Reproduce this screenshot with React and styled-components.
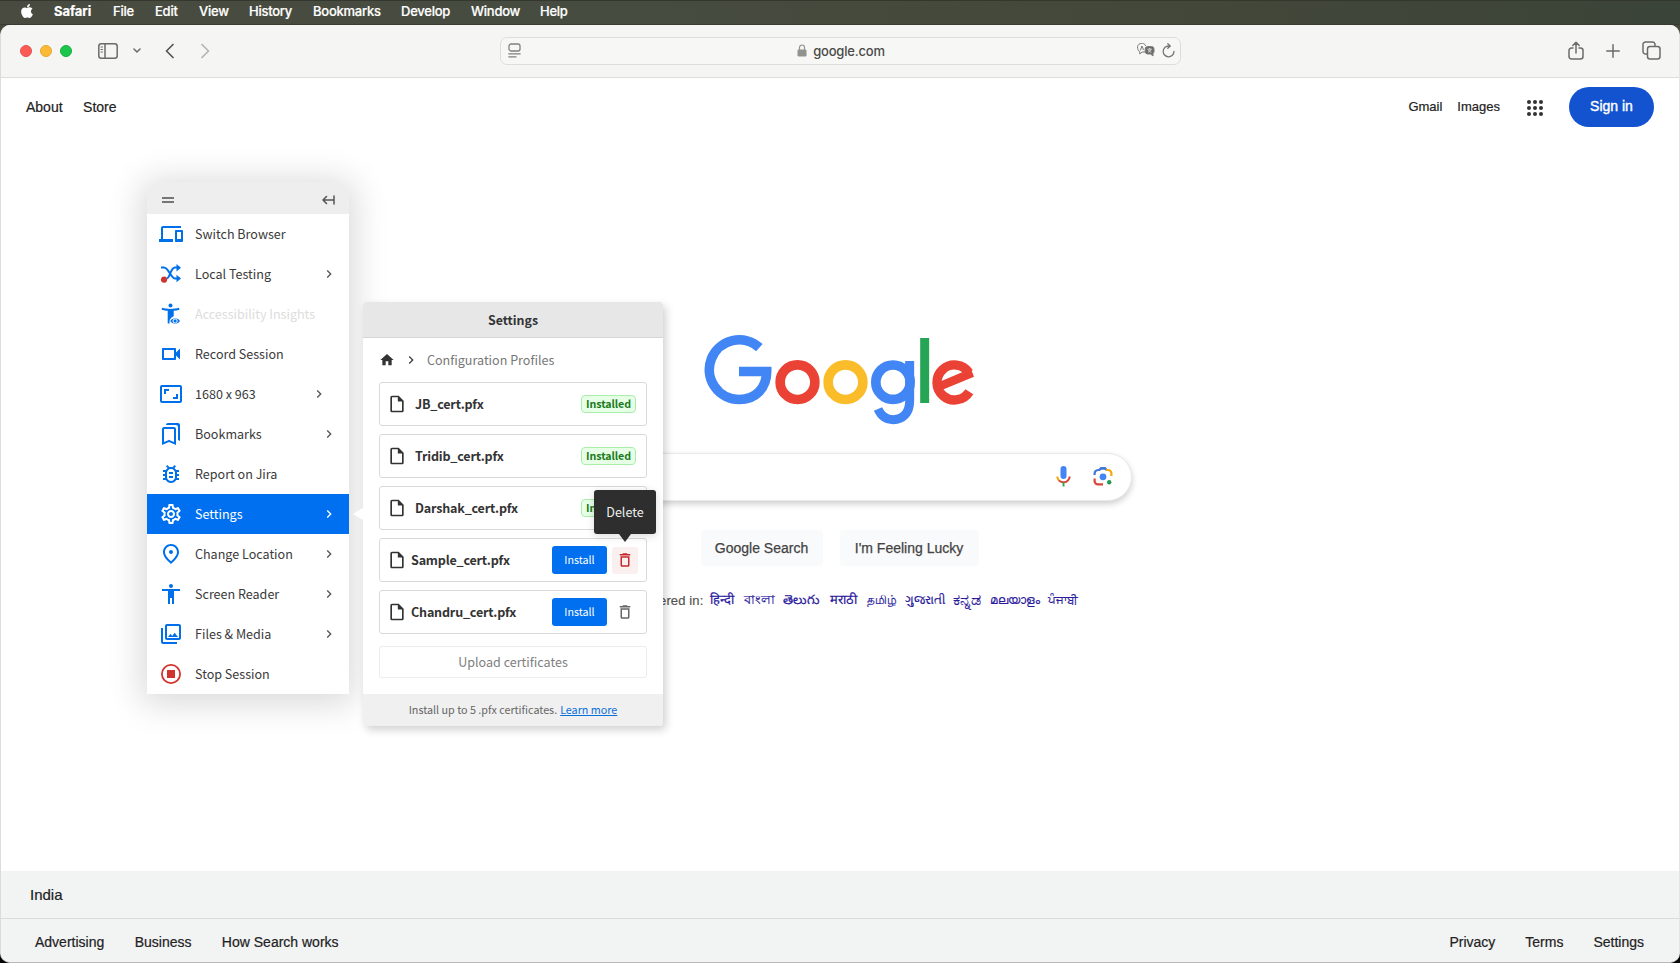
import React from "react";
import styled, { createGlobalStyle } from "styled-components";
import {
  MdDevices, MdOutlineVideocam, MdAspectRatio, MdOutlineBookmarks, MdOutlineBugReport,
  MdOutlineSettings, MdOutlinePlace, MdAccessibility, MdOutlinePhotoLibrary,
  MdChevronRight, MdHome, MdOutlineInsertDriveFile, MdDeleteOutline,
} from "react-icons/md";
import { FaApple } from "react-icons/fa";

const GlobalStyle = createGlobalStyle`
  * { box-sizing: border-box; }
  body { margin: 0; background: #000; overflow: hidden; }
  svg { display: block; flex: none; }
`;

const helvetica = `"Liberation Sans", Arial, sans-serif`;
const source = `"Source Sans Pro", "Noto Sans CJK SC", sans-serif`;

const Desktop = styled.div`
  position: relative;
  width: 1680px;
  height: 963px;
  display: flex;
  flex-direction: column;
  background: linear-gradient(#464a3d 0 60px, #000 60px);
  overflow: hidden;
`;
const MenuBar = styled.nav`
  height: 25px;
  flex: none;
  display: flex;
  align-items: center;
  gap: 21px;
  padding: 0 0 3px 19px;
  background: linear-gradient(90deg, #494b40, #464c40 35%, #44483a 65%, #3b4438);
  border-top: 1px solid #34372e;
  border-bottom: 1px solid #3a3a30;
  font: 600 13px/20px Inter, sans-serif;
  color: #fff;
`;
const MenuItem = styled.span`
  width: ${(p) => p.$w}px;
  white-space: nowrap;
  letter-spacing: ${(p) => (p.$bold ? -0.05 : -0.25)}px;
  font-weight: ${(p) => (p.$bold ? 700 : 500)};
  -webkit-text-stroke: 0.2px #fff;
`;
const Window = styled.div`
  flex: 1;
  display: flex;
  flex-direction: column;
  border-radius: 10px;
  overflow: hidden;
  background: #fff;
  border-left: 1px solid #dcdcdc;
  border-right: 1px solid #e4e4e4;
  border-bottom: 1px solid #b9b9b9;
`;
const Toolbar = styled.header`
  height: 53px;
  flex: none;
  display: flex;
  align-items: center;
  background: #f5f6f3;
  border-bottom: 1px solid #dcdedb;
  padding: 0 18px 1px 19px;
`;
const ToolGroup = styled.div`
  display: flex;
  align-items: center;
  width: 480px;
`;
const Light = styled.i`
  width: 12px;
  height: 12px;
  border-radius: 50%;
  margin-right: 8px;
  background: ${(p) => p.$c};
  border: 1px solid ${(p) => p.$b};
`;
const Address = styled.div`
  width: 681px;
  height: 28px;
  display: flex;
  align-items: center;
  justify-content: space-between;
  border: 1px solid #dcdedc;
  border-radius: 7px;
  background: #f7f8f6;
  padding: 0 5px 0 7px;
`;
const Domain = styled.div`
  display: flex;
  align-items: center;
  gap: 6px;
  margin-left: 24px;
  font: 500 13px/20px Inter, sans-serif;
  letter-spacing: -0.2px;
  color: #4a4a48;
`;
const IconPair = styled.div`
  display: flex;
  gap: 7px;
`;
const ToolEnd = styled.div`
  flex: 1;
  display: flex;
  justify-content: flex-end;
  align-items: center;
  gap: 22px;
`;

const Page = styled.main`
  flex: 1;
  display: flex;
  flex-direction: column;
  font-family: ${helvetica};
  color: #222;
  -webkit-text-stroke: 0.2px currentColor;
`;
const PageTop = styled.div`
  height: 58px;
  display: flex;
  align-items: center;
  justify-content: space-between;
  padding: 0 25px 1px 25px;
  font-size: 14px;
`;
const LinkRow = styled.div`
  display: flex;
  align-items: center;
  gap: ${(p) => p.$gap}px;
  font-size: ${(p) => p.$size || 14}px;
`;
const SignIn = styled.button`
  width: 85px;
  height: 40px;
  border: 0;
  border-radius: 20px;
  background: #1353cf;
  color: #fff;
  font: 14px ${helvetica};
  -webkit-text-stroke: 0.4px #fff;
  margin-left: 10px;
  padding: 0 0 1px;
`;
const Center = styled.section`
  flex: 1;
  display: flex;
  flex-direction: column;
  align-items: center;
`;
const LogoWrap = styled.div`
  margin-top: 174px;
  height: 130px;
`;
const SearchBar = styled.div`
  margin-top: 13px;
  width: 584px;
  height: 48px;
  border-radius: 24px;
  background: #fff;
  border: 1px solid #e9e9e9;
  box-shadow: 0 3px 6px rgba(32, 33, 36, 0.22);
  display: flex;
  align-items: center;
  justify-content: flex-end;
  gap: 22px;
  padding: 0 18px 2px 0;
`;
const SearchButtons = styled.div`
  display: flex;
  gap: 17px;
  margin: 29px 1px 0 0;
`;
const SearchButton = styled.button`
  width: ${(p) => p.$w}px;
  height: 36px;
  border: 0;
  border-radius: 4px;
  background: #f9fafb;
  color: #444;
  font: 14px ${helvetica};
  -webkit-text-stroke: 0.25px #444;
  padding: 0;
`;
const Languages = styled.div`
  width: 484px;
  display: flex;
  align-items: center;
  margin-top: 22px;
  height: 24px;
  font-size: 13px;
  color: #555;
`;
const Offered = styled.span`
  width: 112px;
  white-space: nowrap;
  letter-spacing: 0.13px;
`;
const Lang = styled.a`
  width: ${(p) => p.$w}px;
  font-size: ${(p) => p.$size || 13}px;
  line-height: 24px;
  white-space: nowrap;
  color: #2a1a9c;
`;
const FootRow = styled.div`
  height: ${(p) => p.$h}px;
  flex: none;
  display: flex;
  align-items: center;
  justify-content: space-between;
  background: #f2f3f3;
  padding: ${(p) => p.$pad};
  border-top: 1px solid ${(p) => p.$line || "#f2f3f3"};
  font-size: ${(p) => p.$size}px;
`;

const SidePanel = styled.aside`
  position: absolute;
  left: 147px;
  top: 182px;
  width: 202px;
  border-radius: 10px 10px 2px 2px;
  background: #fff;
  box-shadow: 0 4px 34px 6px rgba(0, 0, 0, 0.15);
  font: 12.55px/20px ${source};
  color: #333;
`;
const SideHead = styled.div`
  height: 32px;
  display: flex;
  align-items: center;
  justify-content: space-between;
  padding: 4px 14px 0 15px;
  background: #eee;
  border-radius: 10px 10px 0 0;
`;
const SideRow = styled.div`
  height: 40px;
  display: flex;
  align-items: center;
  padding-right: ${(p) => p.$end || 10}px;
  background: ${(p) => (p.$active ? "#0070f0" : "#fff")};
  color: ${(p) => (p.$active ? "#fff" : p.$muted ? "#ddd" : "#3a3a3a")};
`;
const SideIcon = styled.span`
  width: 48px;
  display: flex;
  justify-content: center;
  color: ${(p) => (p.$active ? "#fff" : "#0070ea")};
`;
const SideLabel = styled.span`
  flex: 1;
  white-space: nowrap;
`;
const Arrow = styled(MdChevronRight)`
  color: ${(p) => (p.$active ? "#fff" : "#555")};
`;

const Popover = styled.section`
  position: absolute;
  left: 363px;
  top: 302px;
  width: 300px;
  height: 424px;
  display: flex;
  flex-direction: column;
  border-radius: 4px;
  background: #fff;
  box-shadow: 3px 4px 8px rgba(0, 0, 0, 0.18);
  font: 12.55px/20px ${source};
  color: #333;
`;
const Pointer = styled.i`
  position: absolute;
  left: -10px;
  top: 206px;
  border: 6px solid transparent;
  border-left: 0;
  border-right: 10px solid #fff;
`;
const PopTitle = styled.h2`
  margin: 0;
  height: 36px;
  display: flex;
  align-items: center;
  justify-content: center;
  background: #e7e7e7;
  border-bottom: 1px solid #d6d6d6;
  border-radius: 4px 4px 0 0;
  font: 600 12.4px/20px ${source};
`;
const Crumbs = styled.div`
  height: 44px;
  display: flex;
  align-items: center;
  padding: 0 0 0 16px;
  color: #777;
`;
const CrumbText = styled.span`
  margin-left: 8px;
`;
const Cards = styled.div`
  display: flex;
  flex-direction: column;
  gap: 8px;
  padding: 0 16px;
`;
const Card = styled.div`
  height: 44px;
  display: flex;
  align-items: center;
  border: 1px solid #d9d9d9;
  border-radius: 3px;
  padding: 0 8px 0 7px;
  font-weight: 600;
`;
const CardName = styled.span`
  flex: 1;
  margin-left: ${(p) => p.$gap}px;
  letter-spacing: -0.19px;
`;
const Badge = styled.span`
  width: 55px;
  height: 18px;
  margin-right: 2px;
  display: flex;
  align-items: center;
  justify-content: center;
  border: 1px solid #a9efa9;
  border-radius: 4px;
  background: #e6ffe6;
  color: #1b7a1b;
  font-size: 10.7px;
  letter-spacing: -0.1px;
`;
const Install = styled.button`
  width: 55px;
  height: 28px;
  border: 0;
  border-radius: 3px;
  background: #0070f0;
  color: #fff;
  font: 10.7px/16px ${source};
  padding: 0;
`;
const Trash = styled.span`
  position: relative;
  width: 26px;
  height: 27px;
  margin-left: 5px;
  display: flex;
  align-items: center;
  justify-content: center;
  border-radius: 3px;
  background: ${(p) => (p.$hot ? "#faf0ef" : "transparent")};
  color: ${(p) => (p.$hot ? "#c4282d" : "#666")};
`;
const Tooltip = styled.span`
  position: absolute;
  left: -18px;
  bottom: 40px;
  width: 62px;
  height: 44px;
  display: flex;
  align-items: center;
  justify-content: center;
  border-radius: 3px;
  background: #2e2e2e;
  color: #eee;
  font-weight: 400;
  box-shadow: 0 2px 8px rgba(0, 0, 0, 0.15);
  &::after {
    content: "";
    position: absolute;
    top: 44px;
    left: 25px;
    border: 6px solid transparent;
    border-top: 8px solid #2e2e2e;
    border-bottom: 0;
  }
`;
const Upload = styled.button`
  height: 32px;
  margin: 12px 16px 16px;
  border: 1px solid #ececec;
  border-radius: 3px;
  background: #fff;
  color: #808080;
  font: 12.55px/20px ${source};
`;
const PopFoot = styled.div`
  height: 32px;
  display: flex;
  align-items: center;
  justify-content: center;
  gap: 3px;
  background: #f0f0f0;
  border-radius: 0 0 4px 4px;
  color: #666;
  font-size: 10.75px;
`;
const Learn = styled.a`
  color: #0b6fd8;
  text-decoration: underline;
`;

const Line = ({ w, h, sw = 1.5, c = "#6b6b69", children, ml = 0 }) => (
  <svg width={w} height={h} viewBox={`0 0 ${w} ${h}`} fill="none" stroke={c} strokeWidth={sw}
    strokeLinecap="round" strokeLinejoin="round" style={{ marginLeft: ml }}>{children}</svg>
);

const ShuffleIcon = () => (
  <svg width="20" height="20" viewBox="0 0 20 20" fill="none" stroke="#0070ea" strokeWidth="2">
    <path d="M0 3.500H3C7.500 3.500 10 14.500 14 14.500H17M6 14.500C9.500 13 9.500 3.500 14 3.500H17" />
    <path d="M15.500 0L20 3.700L15.500 7.400zM15.500 10.800L20 14.500L15.500 18.200z" fill="#0070ea" stroke="none" />
    <circle cx="3" cy="15.700" r="3.100" fill="#d0342f" stroke="none" />
  </svg>
);
const InsightsIcon = () => (
  <svg width="20" height="22" viewBox="0 0 20 22" fill="#0070ea">
    <circle cx="9.500" cy="2.400" r="2" />
    <path d="M1 4.800C6 6.300 13 6.300 18 4.800L18.400 6.700C16.600 7.200 14.500 7.600 12.700 7.800V13.200C10.500 14 8.800 16 8.500 18V20.500H6.700V7.800C4.800 7.600 2.400 7.200.6 6.700z" />
    <path d="M9.300 18C11.200 14.300 17 14.300 18.900 18C17 21.700 11.200 21.700 9.300 18z" />
    <circle cx="14.100" cy="18" r="2.100" fill="#0070ea" stroke="#fff" strokeWidth="1" />
  </svg>
);
const StopIcon = () => (
  <svg width="20" height="20" viewBox="0 0 20 20" fill="none" stroke="#d0342f" strokeWidth="1.8">
    <circle cx="10" cy="10" r="9.1" />
    <rect x="6" y="6" width="8" height="8" fill="#d0342f" stroke="none" />
  </svg>
);

const Logo = () => (
  <svg width="320" height="130" viewBox="0 0 960 390" fill="none" strokeWidth="29">
    <path stroke="#4285f4" d="M238 113A89.500 89.500 0 1 0 177 268.500C228 268.500 260 233 260 184.500H177" />
    <circle cx="352.500" cy="216.500" r="52" stroke="#ea4335" />
    <circle cx="496.500" cy="216.500" r="52" stroke="#fbbc2a" />
    <circle cx="639" cy="216.500" r="51.500" stroke="#4285f4" />
    <path stroke="#4285f4" strokeWidth="27" d="M689 153V273C689 310 667 329 640 329C618 329 603 317 594 297" />
    <path stroke="#27a556" strokeWidth="27" d="M734 84V279" />
    <path stroke="#ea4335" strokeWidth="28" d="M868 245A52.500 52.500 0 1 1 867 188" />
    <path fill="#ea4335" d="M779 215L848 186L864 170L875 182L882 200L784 241z" />
  </svg>
);
const Mic = () => (
  <svg width="15" height="21" viewBox="0 0 15 21" fill="none" strokeWidth="2">
    <rect x="4.500" y="0" width="6" height="13" rx="3" fill="#4285f4" />
    <path d="M1.200 10.500C1.500 12.500 2 13.500 3 14.600" stroke="#f2a90c" />
    <path d="M2.800 14.400C5.500 17 10 17 12 14.400C13 13.200 13.500 12 13.800 10.500" stroke="#d8473a" />
    <path d="M7.500 16.400V20.500" stroke="#34a853" />
  </svg>
);
const Lens = () => (
  <svg width="20" height="20" viewBox="0 0 20 20" fill="none" strokeWidth="2.200">
    <path d="M1.600 9V7.500A3.500 3.500 0 0 1 5 4H6.500L8 2H12L13.500 4" stroke="#4079d8" />
    <path d="M7 3.800L8 1.600H12L13 3.800z" fill="#4079d8" />
    <path d="M13 4H15A3.400 3.400 0 0 1 18.400 7.500V10" stroke="#f2a90c" />
    <path d="M1.600 12.500V15A3.400 3.400 0 0 0 5 18.400H10" stroke="#d8473a" />
    <circle cx="10" cy="10.800" r="3.400" fill="#4285f4" />
    <circle cx="16.200" cy="16.200" r="2.200" fill="#1f9a55" />
  </svg>
);

const menus = [["Safari", 38, 1], ["File", 21], ["Edit", 23], ["View", 29], ["History", 43], ["Bookmarks", 67], ["Develop", 49], ["Window", 48], ["Help", 28]];
const langs = [["हिन्दी", 34], ["বাংলা", 39], ["తెలుగు", 47], ["मराठी", 37], ["தமிழ்", 38, 12], ["ગુજરાતી", 48, 11.6], ["ಕನ್ನಡ", 37, 15.5], ["മലയാളം", 58, 12], ["ਪੰਜਾਬੀ", 31, 12]];
const side = [
  ["Switch Browser", <MdDevices size={24} />],
  ["Local Testing", <ShuffleIcon />, true],
  ["Accessibility Insights", <InsightsIcon />],
  ["Record Session", <MdOutlineVideocam size={24} />],
  ["1680 x 963", <MdAspectRatio size={24} />, true],
  ["Bookmarks", <MdOutlineBookmarks size={24} />, true],
  ["Report on Jira", <MdOutlineBugReport size={24} />],
  ["Settings", <MdOutlineSettings size={24} />, true],
  ["Change Location", <MdOutlinePlace size={24} />, true],
  ["Screen Reader", <MdAccessibility size={24} />, true],
  ["Files & Media", <MdOutlinePhotoLibrary size={24} />, true],
  ["Stop Session", <StopIcon />],
];
const certs = [
  ["JB_cert.pfx", "installed"], ["Tridib_cert.pfx", "installed"], ["Darshak_cert.pfx", "installed"],
  ["Sample_cert.pfx", "hot"], ["Chandru_cert.pfx", "idle"],
];

function SafariToolbar() {
  return (
    <Toolbar>
      <ToolGroup>
        <Light $c="#fb5b57" $b="#e8504c" />
        <Light $c="#fbb935" $b="#e5a72f" />
        <Light $c="#1bc64b" $b="#17b041" />
        <Line w={20} h={16} ml={18}><rect x=".8" y=".8" width="18.400" height="14.400" rx="2.500" /><path d="M7 1V15" /><path d="M3 4H4.500M3 6.500H4.500M3 9H4.500" strokeWidth="1" /></Line>
        <Line w={8} h={6} ml={15}><path d="M1 1L4 4L7 1" /></Line>
        <Line w={9} h={16} ml={24} sw={1.7} c="#555"><path d="M8 1.500L1.500 8L8 14.500" /></Line>
        <Line w={9} h={16} ml={27} sw={1.600} c="#b2b2b0"><path d="M1 1.500L7.500 8L1 14.500" /></Line>
      </ToolGroup>
      <Address>
        <Line w={13} h={15} sw={1.300} c="#80807e"><rect x="1" y="1" width="11" height="7" rx="2" /><path d="M.8 10.800H12.200M.8 13.800H8" /></Line>
        <Domain>
          <svg width="10" height="13" viewBox="0 0 10 13"><rect y="5.500" x=".5" width="9" height="7" rx="1.300" fill="#92928f" /><path d="M2.500 6V3.500A2.500 2.500 0 0 1 7.500 3.500V6" fill="none" stroke="#92928f" strokeWidth="1.200" /></svg>
          google.com
        </Domain>
        <IconPair>
          <svg width="18" height="14" viewBox="0 0 18 14" fill="none" stroke="#7b7b79" strokeWidth="1">
            <path d="M9.500 9H5L2.800 11V8.800A4 4 0 0 1 .7 5.500A4.200 4.200 0 0 1 8.700 3" /><path d="M3.300 7.500L5 3L6.500 7" />
            <path d="M10.500 3.500H14.500A2.500 2.500 0 0 1 17 6V8.500A2.500 2.500 0 0 1 16 10.500V13L13.500 11H10.500A2.500 2.500 0 0 1 8.200 8.500V6A2.500 2.500 0 0 1 10.500 3.500z" fill="#6d6d6b" />
            <path d="M10.500 6.200H14.800M12.600 5V6M11 9.200C12.500 8.500 13.800 7.500 14 6.200M11.300 6.500C12 8 13 8.800 14.400 9.200" stroke="#eee" strokeWidth=".8" />
          </svg>
          <Line w={13} h={15} sw={1.300} c="#757573"><path d="M7 3A5.400 5.400 0 1 0 12 8.500M5.800.8L8.300 3L5.800 5.300" /></Line>
        </IconPair>
      </Address>
      <ToolEnd>
        <Line w={16} h={20}><path d="M5 7H3.500A2.500 2.500 0 0 0 1 9.500V15.500A2.500 2.500 0 0 0 3.500 18H12.500A2.500 2.500 0 0 0 15 15.500V9.500A2.500 2.500 0 0 0 12.500 7H11M8 12V1.500M4.800 4.500L8 1.300L11.200 4.500" /></Line>
        <Line w={14} h={14}><path d="M7 .8V13.200M.8 7H13.200" /></Line>
        <Line w={19} h={19}><rect x="5.500" y="5.500" width="12.500" height="12.500" rx="2.500" /><path d="M5 13H3.500A2.500 2.500 0 0 1 1 10.500V3.500A2.500 2.500 0 0 1 3.500 1H10.500A2.500 2.500 0 0 1 13 3.500V5" /></Line>
      </ToolEnd>
    </Toolbar>
  );
}

function GooglePage() {
  return (
    <Page>
      <PageTop>
        <LinkRow $gap={20.5}><span>About</span><span>Store</span></LinkRow>
        <LinkRow $gap={15} $size={13}>
          <span>Gmail</span><span>Images</span>
          <svg width="18" height="18" viewBox="0 0 18 18" fill="#333" style={{ marginLeft: 11 }}>
            {[4, 10, 16].map((y) => [3, 9, 15].map((x) => <circle key={`${x}-${y}`} cx={x} cy={y} r="2" />))}
          </svg>
          <SignIn>Sign in</SignIn>
        </LinkRow>
      </PageTop>
      <Center>
        <LogoWrap><Logo /></LogoWrap>
        <SearchBar><Mic /><Lens /></SearchBar>
        <SearchButtons>
          <SearchButton $w={122}>Google Search</SearchButton>
          <SearchButton $w={139}>I'm Feeling Lucky</SearchButton>
        </SearchButtons>
        <Languages>
          <Offered>Google offered in:</Offered>
          {langs.map(([t, w, s]) => <Lang key={t} $w={w} $size={s}>{t}</Lang>)}
        </Languages>
      </Center>
      <FootRow $h={47} $pad="0 29px 2px" $size={15}><span>India</span></FootRow>
      <FootRow $h={44} $pad="3px 35px 0 34px" $size={14} $line="#dadcdb">
        <LinkRow $gap={30.4}><span>Advertising</span><span>Business</span><span>How Search works</span></LinkRow>
        <LinkRow $gap={30}><span>Privacy</span><span>Terms</span><span>Settings</span></LinkRow>
      </FootRow>
    </Page>
  );
}

function SessionPanel() {
  return (
    <SidePanel>
      <SideHead>
        <Line w={12} h={6} sw={2} c="#777"><path d="M0 1H12M0 5H12" strokeLinecap="butt" /></Line>
        <Line w={13} h={10} sw={1.500} c="#555"><path d="M1 5H12M4.500 1.500L1 5L4.500 8.500M12 1V9" /></Line>
      </SideHead>
      {side.map(([label, icon, arrow]) => {
        const active = label === "Settings";
        return (
          <SideRow key={label} $active={active} $muted={label.startsWith("Access")} $end={label.startsWith("1680") ? 22 : 12}>
            <SideIcon $active={active}>{icon}</SideIcon>
            <SideLabel>{label}</SideLabel>
            {arrow && <Arrow size={16} $active={active} />}
          </SideRow>
        );
      })}
    </SidePanel>
  );
}

function SettingsPopover() {
  return (
    <Popover>
      <Pointer />
      <PopTitle>Settings</PopTitle>
      <Crumbs>
        <MdHome size={16} color="#333" />
        <MdChevronRight size={16} color="#444" style={{ marginLeft: 8 }} />
        <CrumbText>Configuration Profiles</CrumbText>
      </Crumbs>
      <Cards>
        {certs.map(([name, state]) => (
          <Card key={name}>
            <MdOutlineInsertDriveFile size={20} />
            <CardName $gap={state === "installed" ? 8 : 4}>{name}</CardName>
            {state === "installed" ? <Badge>Installed</Badge> : (
              <>
                <Install>Install</Install>
                <Trash $hot={state === "hot"}>
                  <MdDeleteOutline size={18} />
                  {state === "hot" && <Tooltip>Delete</Tooltip>}
                </Trash>
              </>
            )}
          </Card>
        ))}
      </Cards>
      <Upload>Upload certificates</Upload>
      <PopFoot>Install up to 5 .pfx certificates. <Learn>Learn more</Learn></PopFoot>
    </Popover>
  );
}

export default function App() {
  return (
    <Desktop>
      <GlobalStyle />
      <MenuBar>
        <FaApple size={16} style={{ marginRight: -2 }} />
        {menus.map(([t, w, b]) => <MenuItem key={t} $w={w} $bold={b}>{t}</MenuItem>)}
      </MenuBar>
      <Window>
        <SafariToolbar />
        <GooglePage />
      </Window>
      <SessionPanel />
      <SettingsPopover />
    </Desktop>
  );
}
